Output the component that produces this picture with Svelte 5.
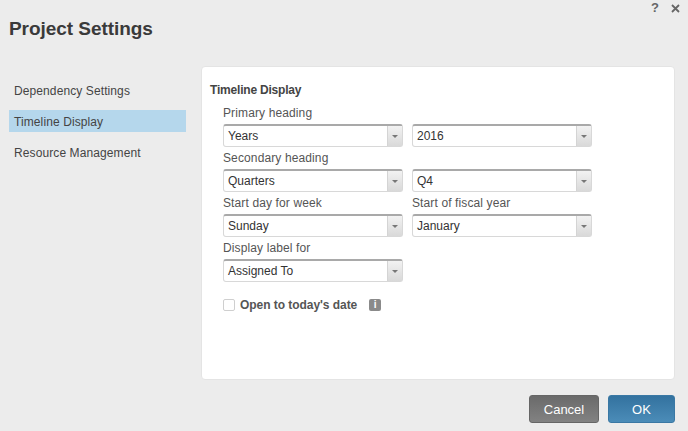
<script>
  const navItems = ['Dependency Settings', 'Timeline Display', 'Resource Management'];
  const activeNav = 'Timeline Display';

  const rows = [
    [{ label: 'Primary heading', value: 'Years' }, { label: '', value: '2016' }],
    [{ label: 'Secondary heading', value: 'Quarters' }, { label: '', value: 'Q4' }],
    [{ label: 'Start day for week', value: 'Sunday' }, { label: 'Start of fiscal year', value: 'January' }],
    [{ label: 'Display label for', value: 'Assigned To' }]
  ];
</script>

<div class="dialog">
  <div class="window-tools">
    <span class="help">?</span>
    <svg class="close" width="9" height="9" viewBox="0 0 9 9">
      <path d="M1 1l7 7M8 1l-7 7" stroke="#666" stroke-width="1.8" fill="none" />
    </svg>
  </div>

  <h1>Project Settings</h1>

  <div class="body">
    <nav>
      {#each navItems as item}
        <div class="nav-item" class:active={item === activeNav}>{item}</div>
      {/each}
    </nav>

    <section class="panel">
      <h2>Timeline Display</h2>
      <div class="fields">
        {#each rows as row}
          <div class="row">
            {#each row as field}
              <div class="field">
                <div class="field-label">{field.label}</div>
                <div class="select">
                  <span class="value">{field.value}</span>
                  <span class="arrow"><i></i></span>
                </div>
              </div>
            {/each}
          </div>
        {/each}
      </div>
      <div class="check-row">
        <span class="checkbox"></span>
        <span class="check-label">Open to today's date</span>
        <span class="info">i</span>
      </div>
    </section>
  </div>

  <div class="footer">
    <button class="btn cancel">Cancel</button>
    <button class="btn ok">OK</button>
  </div>
</div>

<style>
  :global(body) {
    margin: 0;
    background: #ececec;
  }

  .dialog {
    position: relative;
    width: 688px;
    height: 431px;
    overflow: hidden;
    box-sizing: border-box;
    padding: 18px 13px 0 9px;
    background: #ececec;
    font-family: 'Liberation Sans', Arial, sans-serif;
    font-size: 12px;
    color: #444;
  }

  .window-tools {
    position: absolute;
    top: 2px;
    right: 8px;
    display: flex;
    align-items: center;
    gap: 12px;
    height: 12px;
  }

  .help {
    font-size: 13px;
    font-weight: bold;
    color: #666;
    line-height: 12px;
  }

  .close { display: block; }

  h1 {
    margin: 0;
    height: 22px;
    font-size: 19px;
    line-height: 22px;
    font-weight: bold;
    letter-spacing: -0.05px;
    color: #3a3a3a;
  }

  .body {
    display: flex;
    margin-top: 26px;
    height: 314px;
  }

  nav {
    width: 177px;
    margin-right: 15px;
    padding-top: 13px;
  }

  .nav-item {
    height: 22px;
    line-height: 24px;
    padding-left: 5px;
    margin-bottom: 9px;
    color: #444;
    letter-spacing: 0.1px;
  }

  .nav-item.active {
    background: #b5d7ec;
  }

  .panel {
    flex: 1;
    box-sizing: border-box;
    padding: 16px 10px 0 8px;
    background: #fff;
    border: 1px solid #e4e4e4;
    border-radius: 4px;
  }

  h2 {
    margin: 0;
    height: 15px;
    font-size: 12px;
    line-height: 15px;
    font-weight: bold;
    letter-spacing: -0.2px;
    color: #444;
  }

  .fields {
    padding: 4px 0 0 13px;
  }

  .row {
    display: flex;
    gap: 9px;
    height: 45px;
  }

  .field {
    width: 180px;
  }

  .field-label {
    height: 22px;
    line-height: 22px;
    color: #555;
    letter-spacing: 0.12px;
  }

  .select {
    display: flex;
    box-sizing: border-box;
    height: 23px;
    background: #fff;
    border: 1px solid #d8d8d8;
    border-top: 2px solid #a9a9a9;
    border-radius: 3px;
  }

  .value {
    flex: 1;
    padding-left: 4px;
    line-height: 20px;
    color: #333;
  }

  .arrow {
    display: flex;
    align-items: center;
    justify-content: center;
    width: 14px;
    background: linear-gradient(#f2f2f2, #d9d9d9);
    border-left: 1px solid #d4d4d4;
  }

  .arrow i {
    width: 0;
    height: 0;
    border-left: 3px solid transparent;
    border-right: 3px solid transparent;
    border-top: 3px solid #777;
  }

  .check-row {
    display: flex;
    align-items: center;
    height: 14px;
    margin: 16px 0 0 13px;
  }

  .checkbox {
    box-sizing: border-box;
    width: 12px;
    height: 12px;
    background: #fff;
    border: 1px solid #cfcfcf;
    border-radius: 2px;
    margin-right: 5px;
  }

  .check-label {
    font-weight: bold;
    color: #555;
    letter-spacing: -0.05px;
    margin-right: 12px;
  }

  .info {
    width: 12px;
    height: 12px;
    line-height: 12px;
    background: #8a8a8a;
    border-radius: 2px;
    color: #fff;
    font-size: 10px;
    font-weight: bold;
    text-align: center;
  }

  .footer {
    display: flex;
    justify-content: flex-end;
    gap: 9px;
    margin-top: 15px;
  }

  .btn {
    height: 28px;
    padding: 0;
    border: 0;
    border-radius: 3px;
    font-family: inherit;
    font-size: 13px;
    color: #fff;
  }

  .cancel {
    width: 70px;
    background: linear-gradient(#6a6a6a, #828282);
    border: 1px solid #666;
  }

  .ok {
    width: 67px;
    background: linear-gradient(#33729f, #4b8cb8);
    border: 1px solid #3a78a4;
  }
</style>
